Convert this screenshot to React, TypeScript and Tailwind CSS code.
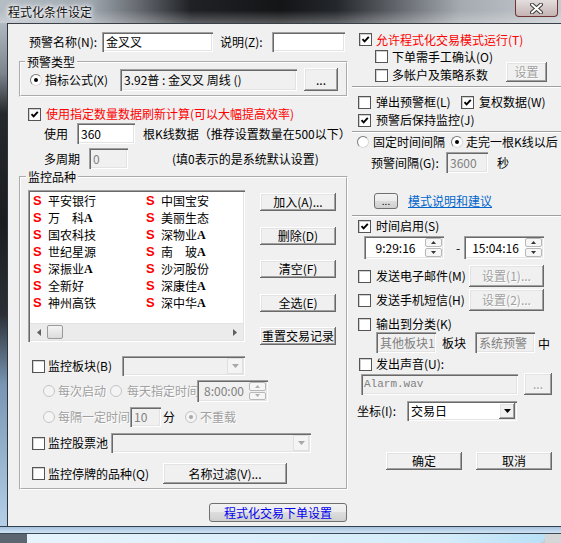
import React from "react";

const sunken =
  "shadow-[inset_1px_1px_0_#a0a0a0,inset_2px_2px_0_#696969,inset_-1px_-1px_0_#ffffff,inset_-2px_-2px_0_#e3e3e3]";
const raised =
  "shadow-[inset_-1px_-1px_0_#696969,inset_1px_1px_0_#ffffff,inset_-2px_-2px_0_#a0a0a0,inset_2px_2px_0_#e3e3e3]";
const themed =
  "rounded-[3px] border border-[#707070] bg-[linear-gradient(180deg,#f2f2f2_0%,#ebebeb_50%,#dddddd_50%,#cfcfcf_100%)]";
const grayText = "text-[#a0a0a0] [text-shadow:1px_1px_0_#ffffff]";

function Check({ on = false }: { on?: boolean }) {
  return (
    <span className="inline-flex w-[13px] h-[13px] shrink-0 items-center justify-center border border-[#555] bg-white shadow-[inset_1px_1px_0_#d0d0d0]">
      {on && (
        <svg width="9" height="9" viewBox="0 0 9 9">
          <path d="M1.5 4.2 L3.6 6.4 L7.8 1.8" stroke="#000" strokeWidth="1.9" fill="none" />
        </svg>
      )}
    </span>
  );
}

function Radio({ on = false, disabled = false }: { on?: boolean; disabled?: boolean }) {
  return (
    <span
      className={`inline-flex w-[12px] h-[12px] shrink-0 rounded-full items-center justify-center border ${
        disabled
          ? "border-[#c4c4c4] bg-[#f4f4f4]"
          : "border-t-[#7a7a7a] border-l-[#7a7a7a] border-r-[#d8d8d8] border-b-[#d8d8d8] bg-white"
      }`}
    >
      {on && <span className={`w-[4px] h-[4px] rounded-full ${disabled ? "bg-[#a8a8a8]" : "bg-black"}`} />}
    </span>
  );
}

function Field({
  className = "",
  value = "",
  disabled = false,
  gray = false,
}: {
  className?: string;
  value?: string;
  disabled?: boolean;
  gray?: boolean;
}) {
  return (
    <div
      className={`${sunken} ${disabled || gray ? "bg-[#f0f0f0]" : "bg-white"} flex items-center pl-[4px] overflow-hidden whitespace-nowrap shrink-0 ${className}`}
    >
      <span className={disabled ? "text-[#808080]" : ""}>{value}</span>
    </div>
  );
}

function Btn({
  className = "",
  children,
  disabled = false,
}: {
  className?: string;
  children?: React.ReactNode;
  disabled?: boolean;
}) {
  return (
    <div
      className={`${raised} bg-[#f0f0f0] flex items-center justify-center whitespace-nowrap shrink-0 ${
        disabled ? grayText : ""
      } ${className}`}
    >
      {children}
    </div>
  );
}

function Arrow({ up = false, color = "#000" }: { up?: boolean; color?: string }) {
  return (
    <svg width="5" height="3" viewBox="0 0 5 3">
      <path d={up ? "M0 3h5L2.5 0z" : "M0 0h5L2.5 3z"} fill={color} />
    </svg>
  );
}

function Combo({
  className = "",
  value = "",
  disabled = false,
}: {
  className?: string;
  value?: string;
  disabled?: boolean;
}) {
  return (
    <div className={`${sunken} ${disabled ? "bg-[#f0f0f0]" : "bg-white"} flex p-[2px] shrink-0 ${className}`}>
      <div className="flex-1 flex items-center pl-[2px] whitespace-nowrap">{value}</div>
      <div
        className={`w-[16px] flex items-center justify-center ${
          disabled ? "bg-[#f4f4f4] border border-[#e0e0e0]" : `${raised} bg-[#f0f0f0]`
        }`}
      >
        <svg width="7" height="4" viewBox="0 0 7 4">
          <path d="M0 0h7L3.5 4z" fill={disabled ? "#a8a8a8" : "#000"} />
        </svg>
      </div>
    </div>
  );
}

function Spin({ className = "", value, disabled = false }: { className?: string; value: string; disabled?: boolean }) {
  const c = disabled ? "#b0b0b0" : "#333";
  return (
    <div className={`relative z-10 ${sunken} ${disabled ? "bg-[#f0f0f0]" : "bg-white"} flex p-[2px] shrink-0 ${className}`}>
      <div className={`flex-1 flex items-center justify-center ${disabled ? "text-[#808080]" : ""}`}>{value}</div>
      <div className="w-[17px] flex flex-col gap-[1px]">
        <div className="flex-1 rounded-[2px] border border-[#b8b8b8] bg-[#f6f6f6] flex items-center justify-center">
          <Arrow up color={c} />
        </div>
        <div className="flex-1 rounded-[2px] border border-[#b8b8b8] bg-[#f6f6f6] flex items-center justify-center">
          <Arrow color={c} />
        </div>
      </div>
    </div>
  );
}

function Sep() {
  return <div className="h-[2px] border-t border-t-[#a0a0a0] border-b border-b-white" />;
}

const stocksA = ["平安银行", "万　科", "国农科技", "世纪星源", "深振业", "全新好", "神州高铁"];
const aA = [false, true, false, false, true, false, false];
const stocksB = ["中国宝安", "美丽生态", "深物业", "南　玻", "沙河股份", "深康佳", "深中华"];
const aB = [false, false, true, true, false, true, true];

function StockCol({ names, flags }: { names: string[]; flags: boolean[] }) {
  return (
    <div className="w-[113px] shrink-0 flex flex-col">
      {names.map((n, i) => (
        <div key={i} className="h-[17px] flex items-center whitespace-nowrap">
          <span className="w-[15px] text-[#ff0000] font-bold font-['Liberation_Sans',sans-serif] text-[13px]">S</span>
          <span>{n}</span>
          {flags[i] && (
            <span className="font-['Liberation_Serif',serif] font-bold text-[12px] leading-[12px] mt-[1px]">A</span>
          )}
        </div>
      ))}
    </div>
  );
}

function TitleBar() {
  return (
    <div className="h-[23px] flex bg-[linear-gradient(180deg,rgba(255,255,255,0)_45%,rgba(255,255,255,0.28)_100%),linear-gradient(90deg,#b4bcc4_0%,#a0a8b0_16%,#5c6066_26%,#1f2125_34%,#131517_50%,#24272b_60%,#5e6268_70%,#a4aab0_82%,#c6cbd0_100%)]">
      <span className="ml-[8px] mt-[4px] h-[15px] text-[12px] leading-[15px] text-[#111] [text-shadow:0_0_6px_#fff,0_0_6px_#fff,0_0_3px_#fff]">
        程式化条件设定
      </span>
      <div className="ml-auto mr-[3px] w-[43px] h-[17px] rounded-b-[4px] border border-t-0 border-[#6e3434] bg-[linear-gradient(180deg,#e4dede_0%,#d4c8c8_50%,#c6b4b4_100%)] flex items-center justify-center">
        <svg width="13" height="11" viewBox="0 0 13 11">
          <path d="M2 1.5 L11 9.5 M11 1.5 L2 9.5" stroke="#3a3a3a" strokeWidth="4" strokeLinecap="round" />
          <path d="M2 1.5 L11 9.5 M11 1.5 L2 9.5" stroke="#fff" strokeWidth="2" strokeLinecap="round" />
        </svg>
      </div>
    </div>
  );
}

function LeftCol() {
  return (
    <div className="w-[344px] shrink-0 flex flex-col">
      <div className="mt-[8px] h-[20px] flex items-center">
        <span className="ml-[21px] w-[73px] whitespace-nowrap">预警名称(N):</span>
        <Field className="w-[111px] h-[20px]" value="金叉叉" />
        <span className="ml-[7px] w-[52px] whitespace-nowrap">说明(Z):</span>
        <Field className="w-[73px] h-[20px]" />
      </div>

      <fieldset className="mt-[2px] ml-[11px] w-[329px] border-2 [border-style:groove] border-white pb-[4px]">
        <legend className="ml-[4px] px-[2px] leading-[16px]">预警类型</legend>
        <div className="-mt-[2px] h-[23px] flex items-center">
          <span className="ml-[9px] flex"><Radio on /></span>
          <span className="ml-[3px] w-[75px] whitespace-nowrap">指标公式(X)</span>
          <Field className="w-[177px] h-[22px]" gray value="3.92普 : 金叉叉 周线 ()" />
          <Btn className="ml-[7px] w-[34px] h-[23px]">...</Btn>
        </div>
      </fieldset>

      <div className="mt-[9px] h-[16px] flex items-center">
        <span className="ml-[20px] flex"><Check on /></span>
        <span className="ml-[5px] text-[#ff0000] whitespace-nowrap">使用指定数量数据刷新计算(可以大幅提高效率)</span>
      </div>

      <div className="mt-[1px] h-[21px] flex items-center">
        <span className="ml-[36px] w-[33px]">使用</span>
        <Field className="w-[58px] h-[21px]" value="360" />
        <span className="ml-[8px] whitespace-nowrap">根K线数据（推荐设置数量在500以下）</span>
      </div>

      <div className="mt-[4px] h-[21px] flex items-center">
        <span className="ml-[36px] w-[45px]">多周期</span>
        <Field className="w-[39px] h-[21px]" disabled value="0" />
        <span className="ml-[44px] whitespace-nowrap">(填0表示的是系统默认设置)</span>
      </div>

      <fieldset className="ml-[11px] w-[329px] border-2 [border-style:groove] border-white pb-[4px]">
        <legend className="ml-[5px] px-[2px] leading-[16px]">监控品种</legend>
        <div className="mt-[5px] flex">
          <div className={`ml-[7px] w-[217px] h-[152px] shrink-0 ${sunken} bg-white p-[2px] flex flex-col`}>
            <div className="flex-1 flex pl-[3px] overflow-hidden">
              <StockCol names={stocksA} flags={aA} />
              <StockCol names={stocksB} flags={aB} />
            </div>
            <div className="h-[17px] flex bg-[#ebebeb] border-t border-[#e2e2e2]">
              <div className="w-[17px] flex items-center justify-center">
                <svg width="4" height="7" viewBox="0 0 4 7"><path d="M4 0v7L0 3.5z" fill="#606060" /></svg>
              </div>
              <div className="w-[16px] my-[1px] rounded-[2px] border border-[#9a9a9a] bg-[linear-gradient(180deg,#f4f4f4,#dcdcdc)]" />
              <div className="flex-1" />
              <div className="w-[17px] flex items-center justify-center">
                <svg width="4" height="7" viewBox="0 0 4 7"><path d="M0 0v7L4 3.5z" fill="#606060" /></svg>
              </div>
            </div>
          </div>
          <div className="ml-[15px] mt-[3px] w-[76px] flex flex-col">
            <Btn className="h-[18px]">加入(A)...</Btn>
            <Btn className="mt-[16px] h-[18px]">删除(D)</Btn>
            <Btn className="mt-[15px] h-[18px]">清空(F)</Btn>
            <Btn className="mt-[16px] h-[18px]">全选(E)</Btn>
            <Btn className="mt-[15px] h-[18px]">重置交易记录</Btn>
          </div>
        </div>

        <div className="mt-[11px] h-[20px] flex items-center">
          <span className="ml-[11px] flex"><Check /></span>
          <span className="ml-[3px] w-[74px] whitespace-nowrap">监控板块(B)</span>
          <Combo className="w-[123px] h-[20px]" disabled />
        </div>

        <div className="mt-[4px] h-[22px] flex items-center">
          <span className="ml-[22px] flex"><Radio disabled /></span>
          <span className={`ml-[3px] w-[52px] whitespace-nowrap ${grayText}`}>每次启动</span>
          <Radio disabled />
          <span className={`ml-[5px] w-[70px] shrink-0 whitespace-nowrap ${grayText}`}>每天指定时间</span>
          <Spin className="w-[71px] h-[22px]" value="8:00:00" disabled />
        </div>

        <div className="mt-[5px] h-[20px] flex items-center">
          <span className="ml-[22px] flex"><Radio disabled /></span>
          <span className={`ml-[3px] w-[72px] shrink-0 whitespace-nowrap ${grayText}`}>每隔一定时间</span>
          <Field className="relative z-10 w-[31px] h-[20px]" disabled value="10" />
          <span className="ml-[2px] w-[12px]">分</span>
          <span className="ml-[10px] flex"><Radio on disabled /></span>
          <span className={`ml-[3px] whitespace-nowrap ${grayText}`}>不重载</span>
        </div>

        <div className="mt-[6px] h-[20px] flex items-center">
          <span className="ml-[11px] flex"><Check /></span>
          <span className="ml-[3px] w-[60px] whitespace-nowrap">监控股票池</span>
          <Combo className="ml-[3px] w-[200px] h-[20px]" disabled />
        </div>

        <div className="mt-[10px] h-[21px] flex items-center">
          <span className="ml-[11px] flex"><Check /></span>
          <span className="ml-[3px] w-[115px] whitespace-nowrap">监控停牌的品种(Q)</span>
          <Btn className="w-[124px] h-[21px]">名称过滤(V)...</Btn>
        </div>
      </fieldset>

      <div className={`mt-[13px] ml-[201px] w-[138px] h-[19px] ${themed} flex items-center justify-center text-[#0000ee] whitespace-nowrap`}>
        程式化交易下单设置
      </div>
    </div>
  );
}

function RightCol() {
  return (
    <div className="flex-1 flex flex-col">
      <div className="mt-[7px] h-[17px] flex items-center">
        <span className="ml-[7px] flex"><Check on /></span>
        <span className="ml-[4px] text-[#ff0000] whitespace-nowrap">允许程式化交易模式运行(T)</span>
      </div>
      <div className="h-[17px] flex items-center">
        <span className="ml-[23px] flex"><Check /></span>
        <span className="ml-[4px] whitespace-nowrap">下单需手工确认(O)</span>
      </div>
      <div className="h-[20px] flex items-center">
        <span className="ml-[23px] flex"><Check /></span>
        <span className="ml-[4px] w-[96px] whitespace-nowrap">多帐户及策略系数</span>
        <Btn className="ml-[18px] w-[41px] h-[20px] self-start -mt-[3px]" disabled>设置</Btn>
      </div>
      <div className="mt-[1px]"><Sep /></div>

      <div className="mt-[6px] h-[16px] flex items-center">
        <span className="ml-[6px] flex"><Check /></span>
        <span className="ml-[5px] w-[85px] whitespace-nowrap">弹出预警框(L)</span>
        <Check on />
        <span className="ml-[5px] whitespace-nowrap">复权数据(W)</span>
      </div>
      <div className="mt-[2px] h-[16px] flex items-center">
        <span className="ml-[6px] flex"><Check on /></span>
        <span className="ml-[5px] whitespace-nowrap">预警后保持监控(J)</span>
      </div>
      <div className="mt-[3px]"><Sep /></div>

      <div className="mt-[1px] h-[16px] flex items-center">
        <span className="ml-[5px] flex"><Radio /></span>
        <span className="ml-[4px] w-[78px] whitespace-nowrap">固定时间间隔</span>
        <Radio on />
        <span className="ml-[3px] whitespace-nowrap">走完一根K线以后</span>
      </div>
      <div className="mt-[2px] h-[21px] flex items-center">
        <span className="ml-[19px] w-[75px] whitespace-nowrap">预警间隔(G):</span>
        <Field className="w-[42px] h-[21px]" disabled value="3600" />
        <span className="ml-[9px]">秒</span>
      </div>

      <div className="mt-[20px] h-[16px] flex items-center">
        <div className={`ml-[22px] w-[24px] h-[16px] ${themed} flex items-center justify-center text-[10px] leading-[10px]`}>...</div>
        <span className="ml-[10px] text-[#0066cc] underline whitespace-nowrap">模式说明和建议</span>
      </div>
      <div className="mt-[6px]"><Sep /></div>

      <div className="mt-[1px] h-[16px] flex items-center">
        <span className="ml-[6px] flex"><Check on /></span>
        <span className="ml-[5px] whitespace-nowrap">时间启用(S)</span>
      </div>
      <div className="mt-[2px] h-[23px] flex items-center">
        <Spin className="ml-[12px] w-[80px] h-[23px]" value="9:29:16" />
        <span className="ml-[8px] w-[12px] text-center">-</span>
        <Spin className="w-[80px] h-[23px]" value="15:04:16" />
      </div>

      <div className="mt-[6px] h-[22px] flex items-center">
        <span className="ml-[6px] flex"><Check /></span>
        <span className="ml-[5px] w-[93px] whitespace-nowrap">发送电子邮件(M)</span>
        <Btn className="w-[75px] h-[22px]" disabled>设置(1)...</Btn>
      </div>
      <div className="mt-[2px] h-[22px] flex items-center">
        <span className="ml-[6px] flex"><Check /></span>
        <span className="ml-[5px] w-[93px] whitespace-nowrap">发送手机短信(H)</span>
        <Btn className="w-[75px] h-[22px]" disabled>设置(2)...</Btn>
      </div>

      <div className="mt-[5px] h-[16px] flex items-center">
        <span className="ml-[6px] flex"><Check /></span>
        <span className="ml-[5px] whitespace-nowrap">输出到分类(K)</span>
      </div>
      <div className="h-[21px] flex items-center">
        <Field className="ml-[24px] w-[60px] h-[21px]" disabled value="其他板块1" />
        <span className="ml-[6px] w-[24px]">板块</span>
        <Field className="ml-[9px] w-[60px] h-[21px]" disabled value="系统预警" />
        <span className="ml-[3px] mt-[3px]">中</span>
      </div>

      <div className="mt-[3px] h-[16px] flex items-center">
        <span className="ml-[7px] flex"><Check /></span>
        <span className="ml-[4px] whitespace-nowrap">发出声音(U):</span>
      </div>
      <div className="mt-[1px] h-[22px] flex items-center">
        <div className={`ml-[9px] w-[157px] h-[21px] ${sunken} bg-[#f0f0f0] flex items-center pl-[3px] text-[#808080] font-['Liberation_Mono',monospace] text-[11px]`}>
          Alarm.wav
        </div>
        <Btn className="ml-[6px] w-[28px] h-[22px]" disabled>...</Btn>
      </div>

      <div className="mt-[6px] h-[20px] flex items-center">
        <span className="ml-[5px] w-[50px] whitespace-nowrap">坐标(I):</span>
        <Combo className="w-[110px] h-[20px]" value="交易日" />
      </div>

      <div className="mt-[31px] h-[18px] flex items-center">
        <Btn className="ml-[34px] w-[76px] h-[18px]">确定</Btn>
        <Btn className="ml-[14px] w-[76px] h-[18px]">取消</Btn>
      </div>
    </div>
  );
}

export default function App() {
  return (
    <div className="w-[561px] h-[543px] overflow-hidden bg-[#c8ccd2] font-['Noto_Sans_CJK_SC',sans-serif] text-[12px] leading-[16px] text-black">
      <TitleBar />
      <div className="h-[503px] flex">
        <div className="w-[8px] shrink-0 border-r border-[#2c3440] bg-[linear-gradient(180deg,#b0b8c0_0%,#7c848c_10%,#25282c_18%,#1a1c20_40%,#2c3036_58%,#7896b4_72%,#b4cfe6_100%)]" />
        <div className="flex-1 flex bg-[#f0f0f0] border-t border-[#3a4048]">
          <LeftCol />
          <RightCol />
        </div>
      </div>
      <div className="h-[7px] border-t border-[#34404c] bg-[linear-gradient(180deg,#a6c2de_0%,#cfe3f4_100%)]" />
      <div className="h-[10px] flex border-t border-[#3c4854]">
        <div className="w-[27px] bg-[#5c6670]" />
        <div className="w-[518px] rounded-br-[6px] bg-[linear-gradient(90deg,#e6f4fc_0%,#d4ecfa_80%,#b8e0f6_100%)]" />
        <div className="flex-1 bg-[#d4d6d8]" />
      </div>
    </div>
  );
}
